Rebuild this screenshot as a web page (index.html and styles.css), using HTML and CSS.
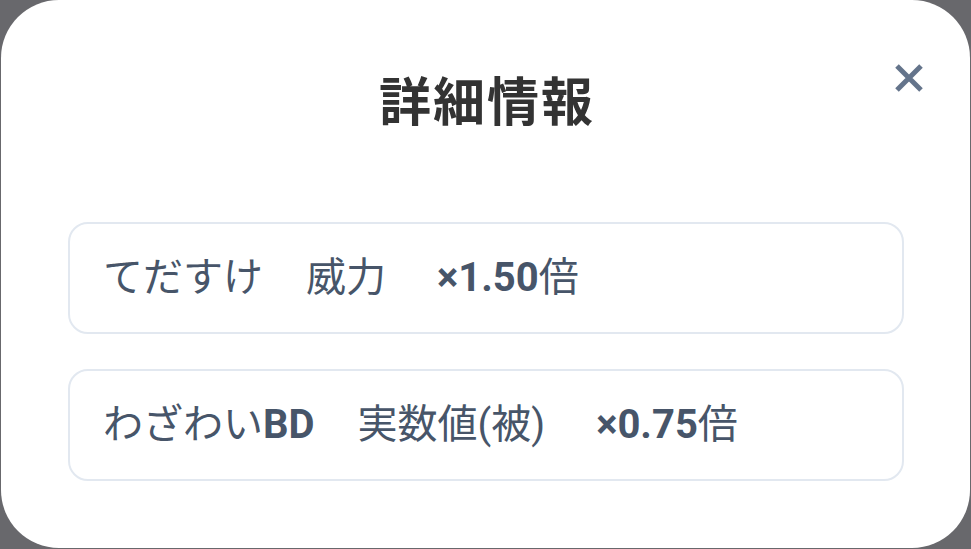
FILE: index.html
```html
<!DOCTYPE html>
<html lang="ja">
<head>
<meta charset="utf-8">
<title>詳細情報</title>
<link rel="stylesheet" href="styles.css">
</head>
<body>
<div class="modal">
  <header class="modal-header">
    <h1 class="modal-title">詳細情報</h1>
    <button class="close-btn" aria-label="閉じる">
      <svg width="30" height="30" viewBox="0 0 30 30"><path d="M3 3L27 27M27 3L3 27" stroke="#64748b" stroke-width="5" fill="none"/></svg>
    </button>
  </header>
  <div class="list">
    <div class="item">
      <span class="label">てだすけ</span>
      <span class="label">威力</span>
      <span class="value"><b>×1.50</b>倍</span>
    </div>
    <div class="item">
      <span class="label">わざわい<b>BD</b></span>
      <span class="label">実数値(被)</span>
      <span class="value"><b>×0.75</b>倍</span>
    </div>
  </div>
</div>
</body>
</html>
```
FILE: styles.css
```css
html, body {
  margin: 0;
  padding: 0;
}
body {
  background: #68686c;
  width: 971px;
  height: 549px;
  overflow: hidden;
  font-family: Roboto, "Noto Sans CJK JP", sans-serif;
}
.modal {
  position: relative;
  box-sizing: border-box;
  margin: 0 1px;
  height: 548px;
  background: #ffffff;
  border-radius: 58px;
  padding: 0 66px 0 67px;
}
.modal-header {
  height: 222px;
  display: flex;
  align-items: flex-start;
  justify-content: center;
}
.modal-title {
  margin: 78px 0 0 2px;
  font-size: 52px;
  line-height: 52px;
  font-weight: 700;
  letter-spacing: 2px;
  color: #333333;
}
.close-btn {
  position: absolute;
  top: 63px;
  right: 46px;
  width: 30px;
  height: 30px;
  padding: 0;
  border: 0;
  background: none;
  display: flex;
}
.list {
  display: flex;
  flex-direction: column;
  gap: 35px;
}
.item {
  box-sizing: border-box;
  height: 112px;
  border: 2px solid #e2e8f0;
  border-radius: 20px;
  display: flex;
  align-items: center;
  padding-left: 33px;
  gap: 43px;
  font-size: 40px;
  line-height: 48px;
  color: #475569;
}
.label {
  white-space: nowrap;
}
.value {
  margin-left: 8px;
  white-space: nowrap;
}
.value b, .label b {
  font-weight: 700;
}
```
